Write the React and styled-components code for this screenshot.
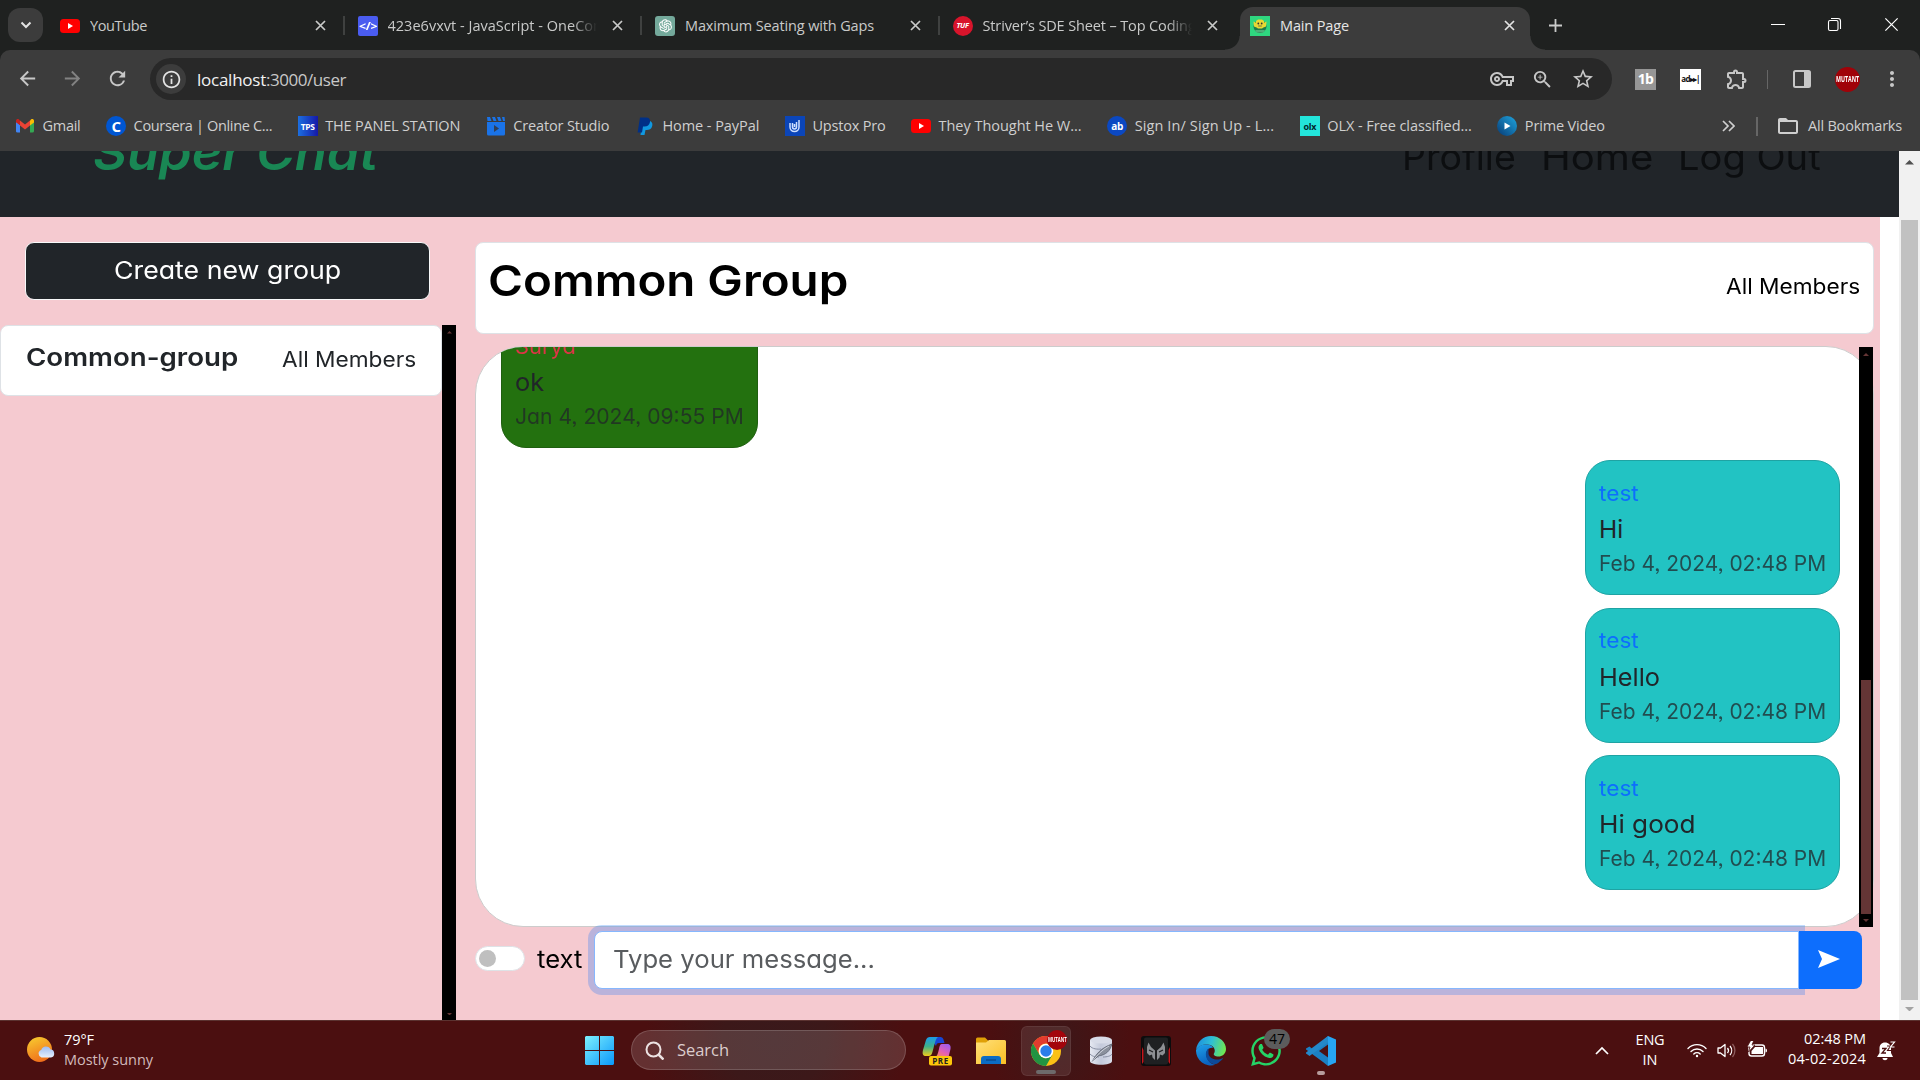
import React, { useLayoutEffect, useRef, useState } from "react";
import styled, { createGlobalStyle, css } from "styled-components";
import {
  MdOutlineVpnKey,
  MdOutlineZoomIn,
  MdStarBorder,
  MdOutlineExtension,
  MdMoreVert,
  MdArrowBack,
  MdArrowForward,
  MdRefresh,
  MdFolderOpen,
  MdInfoOutline,
} from "react-icons/md";
import { FaWhatsapp } from "react-icons/fa";
import { AiOutlineOpenAI } from "react-icons/ai";

const ui = `"Open Sans", "Noto Sans", sans-serif`;
const brand = `Inter, "Open Sans", sans-serif`;

const GlobalStyle = createGlobalStyle`
  * { box-sizing: border-box; }
  body { margin: 0; overflow: hidden; background: #1f2120; font-family: ${ui}; }
  svg { display: block; flex: none; }
`;

/* ---------- text that fills a given width ---------- */

const Tracked = styled.span`
  display: inline-block;
  white-space: nowrap;
`;

function Fit({ w, children }) {
  const ref = useRef(null);
  const [spacing, setSpacing] = useState(0);
  useLayoutEffect(() => {
    setSpacing((w - ref.current.getBoundingClientRect().width) / children.length);
  }, [w, children]);
  return (
    <Tracked ref={ref} style={{ letterSpacing: `${spacing}px` }}>
      {children}
    </Tracked>
  );
}

const Slot = styled.span`
  display: inline-block;
  width: ${(p) => p.$w}px;
  white-space: nowrap;
  text-align: left;
`;

const Stretched = styled.span`
  display: inline-block;
  transform-origin: 0 50%;
`;

function Wide({ w, children }) {
  const ref = useRef(null);
  const [scale, setScale] = useState(1);
  useLayoutEffect(() => {
    setScale(w / ref.current.offsetWidth);
  }, [w, children]);
  return (
    <Slot $w={w}>
      <Stretched ref={ref} style={{ transform: `scaleX(${scale})` }}>
        {children}
      </Stretched>
    </Slot>
  );
}

/* ---------- browser chrome ---------- */

const Screen = styled.div`
  width: 1920px;
  height: 1080px;
  display: flex;
  flex-direction: column;
  overflow: hidden;
`;

const TabStrip = styled.div`
  display: flex;
  height: 50px;
  flex: none;
  background: #1f2120;
  color: #c9cac9;
  font-size: 14.5px;
`;

const TabSearch = styled.div`
  width: 35px;
  height: 34px;
  margin: 8px 3px 0 8px;
  border-radius: 12px;
  background: #3c3c3c;
  display: grid;
  place-items: center;
`;

const Tab = styled.div`
  position: relative;
  width: 297.5px;
  height: 50px;
  padding: 1px 18px 0 14px;
  display: flex;
  align-items: center;
  ${(p) =>
    p.$divider &&
    css`
      &::after {
        content: "";
        position: absolute;
        right: -1px;
        top: 16px;
        width: 2px;
        height: 19px;
        background: #3f4140;
      }
    `}
`;

const ActiveTab = styled(Tab)`
  width: 290px;
  height: 43px;
  margin: 7px 0 0 4px;
  padding: 0 15px 6px 10px;
  border-radius: 13px 13px 0 0;
  background: #3c3c3c;
  color: #e6e6e6;
  &::before,
  &::after {
    content: "";
    position: absolute;
    bottom: 0;
    width: 15px;
    height: 14px;
  }
  &::before {
    left: -15px;
    background: radial-gradient(ellipse at 0 0, transparent 14px, #3c3c3c 15px);
  }
  &::after {
    right: -15px;
    background: radial-gradient(ellipse at 100% 0, transparent 14px, #3c3c3c 15px);
  }
`;

const TabTitle = styled.div`
  width: 209px;
  margin-left: 10px;
  overflow: hidden;
  line-height: 22px;
  mask-image: ${(p) => (p.$fade ? "linear-gradient(90deg, #000 88%, transparent 100%)" : "none")};
`;

const TabClose = styled.div`
  margin-left: auto;
`;

const NewTab = styled.div`
  padding: 19px 0 0 19px;
`;

const WindowButtons = styled.div`
  margin-left: auto;
  padding: 17px 21px 0 0;
  display: flex;
  gap: 42px;
`;

const ToolbarBack = styled.div`
  background: #1f2120;
  flex: none;
`;

const Toolbar = styled.div`
  display: flex;
  align-items: flex-start;
  height: 58px;
  padding: 8px 0 0 16px;
  border-radius: 10px 10px 0 0;
  background: #3c3c3c;
  color: #c7c7c7;
`;

const NavIcon = styled.div`
  width: 45px;
  padding-top: 9px;
  opacity: ${(p) => (p.$dim ? 0.5 : 1)};
`;

const Omnibox = styled.div`
  width: 1462px;
  height: 42px;
  margin-left: -1px;
  border-radius: 21px;
  background: #282828;
  display: flex;
  align-items: center;
  padding: 0 17px 0 6px;
`;

const InfoDisc = styled.div`
  width: 30px;
  height: 30px;
  border-radius: 50%;
  background: #3c3c3c;
  color: #e3e3e3;
  display: grid;
  place-items: center;
`;

const Url = styled.div`
  margin-left: 11px;
  padding-top: 1px;
  font-size: 17px;
  line-height: 26px;
  color: #c9c9c9;
  display: flex;
`;

const Host = styled.span`
  color: #f2f2f2;
`;

const OmniIcons = styled.div`
  margin-left: auto;
  display: flex;
  align-items: center;
  gap: 17px;
`;

const Extensions = styled.div`
  display: flex;
  align-items: center;
  height: 42px;
  margin-left: 23px;
`;

const ExtIcon = styled.div`
  width: 21px;
  height: 21px;
  margin-right: 24px;
  background: ${(p) => p.$bg};
  color: ${(p) => p.$color};
  font: 700 ${(p) => p.$size}px/20px "Open Sans", sans-serif;
  text-align: center;
  letter-spacing: -0.8px;
  overflow: hidden;
`;

const VRule = styled.div`
  width: ${(p) => p.$w || 1}px;
  height: 19px;
  background: #666;
`;

const RuleGap = styled.div`
  margin-left: 21px;
`;

const PanelGroup = styled.div`
  display: flex;
  align-items: center;
  margin-left: 18px;
`;

const PanelSvg = styled.svg`
  margin-left: 25px;
`;

const Avatar = styled.div`
  width: 25px;
  height: 25px;
  border-radius: 50%;
  background: #a00208;
  color: #fff;
  font: 700 9px/24px "Open Sans", sans-serif;
  text-align: center;
  margin: 0 20px 0 24px;
  white-space: nowrap;
`;

const BookmarkBar = styled.div`
  display: flex;
  align-items: center;
  height: 43px;
  flex: none;
  padding: 0 0 7px 15px;
  background: #3c3c3c;
  color: #cfcfcf;
  font-size: 14.5px;
  line-height: 20px;
`;

const Bookmark = styled.div`
  display: flex;
  align-items: center;
  gap: 7.5px;
  margin-right: 25.6px;
`;

const BookmarkEnd = styled.div`
  margin-left: auto;
  display: flex;
  align-items: center;
  padding-right: 18px;
`;

const BookmarkFolder = styled.div`
  display: flex;
  align-items: center;
  gap: 8px;
  margin-left: 18px;
`;

const Badge = styled.div`
  width: 20px;
  height: 20px;
  flex: none;
  border-radius: ${(p) => (p.$round ? "50%" : p.$r || "0")};
  background: ${(p) => p.$bg};
  color: ${(p) => p.$color || "#fff"};
  font: ${(p) => (p.$italic ? "italic " : "")}700 ${(p) => p.$size || 10}px/19px "Open Sans", sans-serif;
  letter-spacing: -0.3px;
  text-align: center;
  display: grid;
  place-items: center;
`;

/* ---------- web page ---------- */

const Page = styled.div`
  display: flex;
  height: 869px;
  flex: none;
  background: #fff;
  font-family: ${brand};
  font-weight: 380;
  font-feature-settings: "cv11", "ss03";
`;

const PageBody = styled.div`
  width: 1899px;
`;

const Navbar = styled.div`
  height: 66px;
  overflow: hidden;
  background: #212529;
`;

const NavInner = styled.div`
  height: 132px;
  margin-top: -67px;
  padding: 0 78px 0 93px;
  display: flex;
  align-items: center;
  justify-content: space-between;
`;

const Brand = styled.div`
  padding-top: 4px;
  color: #198754;
  font-size: 49px;
  font-weight: 600;
  font-style: italic;
`;

const NavLinks = styled.div`
  display: flex;
  gap: 25px;
  padding-top: 13px;
  font-size: 36.5px;
  color: #0c0e10;
`;

const ChatLayout = styled.div`
  display: flex;
  width: 1880px;
  height: 803px;
  background: #f5cad0;
`;

const Sidebar = styled.div`
  width: 456px;
  padding-top: 25px;
  display: flex;
  flex-direction: column;
`;

const CreateButton = styled.div`
  width: 405px;
  height: 57.5px;
  margin: 0 0 25.5px 25px;
  border: 1px solid #f8f9fa;
  border-radius: 9px;
  background: #212529;
  color: #fff;
  font-size: 24.5px;
  line-height: 54px;
  text-align: center;
`;

const GroupList = styled.div`
  flex: 1;
  display: flex;
`;

const GroupCard = styled.div`
  width: 442px;
  height: 71px;
  padding: 0 25px 8px;
  border: 1px solid #dee2e6;
  border-radius: 8px;
  background: #fff;
  color: #212529;
  display: flex;
  align-items: center;
  justify-content: space-between;
`;

const GroupName = styled.div`
  font-size: 24.5px;
  font-weight: 560;
`;

const Members = styled.div`
  font-size: 21.5px;
  padding-top: 4px;
`;

const DarkTrack = styled.div`
  width: ${(p) => p.$w}px;
  background: #000;
  display: flex;
  flex-direction: column;
  align-items: center;
  justify-content: space-between;
  padding: 6px 0 5px;
`;

const Conversation = styled.div`
  width: 1399px;
  margin-left: 19px;
  padding-top: 25px;
  display: flex;
  flex-direction: column;
`;

const Header = styled.div`
  height: 92px;
  padding: 0 13px 0 12px;
  border: 1px solid #dee2e6;
  border-radius: 8px;
  background: #fff;
  color: #000;
  display: flex;
  justify-content: space-between;
`;

const Title = styled.div`
  font-size: 43px;
  font-weight: 570;
  line-height: 75px;
`;

const HeaderMembers = styled.div`
  font-size: 21.5px;
  line-height: 87px;
`;

const ChatFrame = styled.div`
  position: relative;
  height: 581px;
  margin-top: 12px;
`;

const Messages = styled.div`
  height: 100%;
  overflow: hidden;
  padding: 0 33px 36px 25px;
  border: 1px solid #ccc;
  border-radius: 48px;
  background: #fff;
  display: flex;
  flex-direction: column;
  align-items: flex-end;
  justify-content: flex-end;
  gap: 12.3px;
`;

const ChatTrack = styled(DarkTrack)`
  position: absolute;
  right: 1px;
  top: 1px;
  bottom: 0;
`;

const ChatThumb = styled.div`
  width: 10px;
  height: 234px;
  margin: auto 0 5px;
  background: #643535;
`;

const Bubble = styled.div`
  flex: none;
  height: 135px;
  padding: 15.5px 13px 0;
  border: 1px solid ${(p) => (p.$own ? "#1fa3a3" : "#1f5f10")};
  border-radius: 25px;
  background: ${(p) => (p.$own ? "#22c3c3" : "#23710f")};
  color: #212529;
  align-self: ${(p) => (p.$own ? "flex-end" : "flex-start")};
`;

const Sender = styled.div`
  font-size: 21.5px;
  line-height: 33px;
  color: ${(p) => (p.$own ? "#0d6efd" : "#dc3545")};
`;

const Body = styled.div`
  font-size: 24.5px;
  line-height: 38px;
  padding-top: 0.5px;
`;

const Stamp = styled.div`
  font-size: 21.5px;
  line-height: 31px;
  color: rgba(33, 37, 41, 0.75);
`;

const Composer = styled.div`
  position: relative;
  display: flex;
  align-items: center;
  height: 58px;
  margin-top: 4px;
  color: #000;
`;

const Toggle = styled.div`
  width: 50px;
  height: 25px;
  margin-bottom: 3px;
  border-radius: 13px;
  border: 1px solid #dee2e6;
  background: #fff;
  padding: 3px;
  &::before {
    content: "";
    display: block;
    width: 17px;
    height: 17px;
    border-radius: 50%;
    background: #bfbfbf;
  }
`;

const ModeLabel = styled.div`
  margin: 0 12px 3px 12px;
  font-size: 24.5px;
  width: 45px;
`;

const Input = styled.div`
  width: 1205px;
  height: 58px;
  padding-left: 18px;
  border: 1px solid #86b7fe;
  border-radius: 8px 0 0 8px;
  background: #fff;
  box-shadow: 0 0 0 6px rgba(13, 110, 253, 0.25);
  font-size: 24.5px;
  line-height: 55px;
  color: #595c5f;
`;

const Send = styled.div`
  position: relative;
  width: 63px;
  height: 58px;
  padding: 0 4px 2px 0;
  border-radius: 0 8px 8px 0;
  background: #0d6efd;
  display: grid;
  place-items: center;
`;

const PageTrack = styled.div`
  width: 21px;
  background: #f1f1f1;
  display: flex;
  flex-direction: column;
  align-items: center;
  justify-content: space-between;
  padding: 9px 0 9px;
`;

const PageThumb = styled.div`
  width: 17px;
  height: 780px;
  margin: auto 0 7px;
  background: #c1c1c1;
`;

/* ---------- taskbar ---------- */

const Taskbar = styled.div`
  height: 60px;
  flex: none;
  border-top: 1px solid #5b3230;
  background: radial-gradient(ellipse 130px 120px at 775px 20px, #3a191b 0%, #3c1819 40%, transparent 100%),
    radial-gradient(ellipse 70px 90px at 1060px 20px, #3d1718 0%, transparent 100%), #4b0f10;
  color: #fff;
  display: flex;
  align-items: center;
  font-size: 14.5px;
  line-height: 20px;
`;

const Weather = styled.div`
  width: 585px;
  padding-left: 27px;
  display: flex;
  align-items: center;
  gap: 8px;
`;

const WeatherText = styled.div`
  padding-bottom: 2px;
`;

const Muted = styled.div`
  color: #d2babb;
`;

const SearchBox = styled.div`
  width: 275px;
  height: 40px;
  margin: 0 16px 1px 17px;
  padding-left: 13px;
  border: 1px solid rgba(255, 255, 255, 0.16);
  border-radius: 20px;
  background: rgba(255, 255, 255, 0.14);
  display: flex;
  align-items: center;
  gap: 13px;
  color: #dccdcd;
  font-size: 16.5px;
`;

const Apps = styled.div`
  display: flex;
  align-items: center;
  height: 50px;
`;

const AppButton = styled.div`
  position: relative;
  width: 50px;
  height: 50px;
  margin-right: 5px;
  display: grid;
  place-items: center;
  border-radius: 6px;
  ${(p) => p.$active && "background: rgba(255,255,255,.09); border: 1px solid rgba(255,255,255,.07);"}
`;

const ExplorerButton = styled.div`
  width: 50px;
  margin: 0 5px 0 14px;
  display: grid;
  place-items: center;
`;

const Indicator = styled.div`
  position: absolute;
  bottom: 1px;
  left: 50%;
  width: ${(p) => p.$w}px;
  height: 4px;
  margin-left: ${(p) => -p.$w / 2}px;
  border-radius: 2px;
  background: ${(p) => p.$color};
`;

const MiniAvatar = styled.div`
  position: absolute;
  left: 25px;
  top: 3px;
  width: 20px;
  height: 20px;
  border-radius: 50%;
  background: #a3050c;
  font: 700 7.5px/18px "Open Sans", sans-serif;
  text-align: center;
`;

const Count = styled.div`
  position: absolute;
  left: 23px;
  top: 3px;
  width: 26px;
  height: 20px;
  border-radius: 10px;
  background: #5c5c5c;
  color: #000;
  font-size: 14px;
  line-height: 20px;
  text-align: center;
`;

const Tray = styled.div`
  margin-left: auto;
  display: flex;
  align-items: center;
  padding-right: 24px;
`;

const Language = styled.div`
  width: 40px;
  margin: 0 17px 0 21px;
  padding-bottom: 1px;
  text-align: center;
`;

const TrayIcons = styled.div`
  display: flex;
  align-items: center;
  gap: 10px;
  padding-bottom: 1px;
`;

const Clock = styled.div`
  margin: 0 11px 0 20px;
  padding-bottom: 3px;
  text-align: right;
`;

/* ---------- drawings ---------- */

const Cross = ({ size = 11, stroke = 1.7, color = "#c9cac9" }) => (
  <svg width={size} height={size} viewBox="0 0 11 11">
    <path d="M1 1l9 9M10 1l-9 9" stroke={color} strokeWidth={stroke} fill="none" />
  </svg>
);

const YouTube = () => (
  <svg width="20" height="20" viewBox="0 0 20 20">
    <rect y="3" width="20" height="14" rx="3.5" fill="#f00" />
    <path d="M8 7l5 3-5 3z" fill="#fff" />
  </svg>
);

const Triangle = ({ up, size = 5, color }) => (
  <svg width={size} height={size / 2} viewBox="0 0 10 5">
    <path d={up ? "M0 5L5 0l5 5z" : "M0 0h10L5 5z"} fill={color} />
  </svg>
);

const Gmail = () => (
  <svg width="20" height="20" viewBox="0 0 20 20">
    <path d="M1 5v10.500h4V8.500z" fill="#4285f4" />
    <path d="M15 8.500v8h2.500a1.500 1.500 0 001.500-1.500V5z" fill="#34a853" />
    <path d="M15 4.500v5l4-3V5c0-2-2-2.500-3-1.500z" fill="#fbbc04" />
    <path d="M5 4.500l5 4 5-4v5l-5 4-5-4z" fill="#ea4335" />
    <path d="M1 5v1.500l4 3v-5L4 3.500C3 2.500 1 3 1 5z" fill="#c5221f" />
    <path d="M1 6.500v8.500a1.500 1.500 0 001.500 1.500H5v-7z" fill="#4285f4" />
  </svg>
);

const Clapper = () => (
  <svg width="20" height="20" viewBox="0 0 20 20">
    <path d="M1 6h18v12a1.500 1.500 0 01-1.500 1.500h-15A1.500 1.500 0 011 18z" fill="#1a73e8" />
    <path d="M1 1h3l1.500 4h-4zM6 1h3l1.500 4h-3zM11 1h3l1.500 4h-3zM16 1h2.500l.5 4h-2z" fill="#1a73e8" />
    <path d="M8 9l5 3.500L8 16z" fill="#2f3f58" />
  </svg>
);

const PayPal = () => (
  <svg width="16" height="20" viewBox="0 0 16 20">
    <path d="M5 5h6.500c3 0 4.500 2 3.700 5-.7 3-3 4-5.500 4H8.500l-1 5H3.500z" fill="#1098e0" />
    <path d="M3 1.500h6c3.200 0 4.500 1.800 4 4.500-.6 3-2.600 4.500-5.500 4.500H6l-1 6H.6z" fill="#003087" />
  </svg>
);

const Upstox = () => (
  <Badge $bg="#0b45b8">
    <svg width="16" height="16" viewBox="0 0 16 16" fill="none" stroke="#cfe0ff" strokeWidth="1.500">
      <path d="M3 5v4c0 6 9 6 9 0V2M5.500 5v4c0 2.500 4 2.500 4 0V4M7.500 6v3" />
    </svg>
  </Badge>
);

const Prime = () => (
  <svg width="20" height="20" viewBox="0 0 20 20">
    <defs>
      <linearGradient id="prime" x1="0" y1="1" x2="1" y2="0">
        <stop offset="0" stopColor="#073a74" />
        <stop offset="1" stopColor="#1fa6e0" />
      </linearGradient>
    </defs>
    <circle cx="10" cy="10" r="10" fill="url(#prime)" />
    <path d="M7.500 6.500l6 3.500-6 3.500z" fill="#fff" />
  </svg>
);

const PageFavicon = () => (
  <svg width="20" height="20" viewBox="0 0 20 20">
    <rect width="20" height="20" fill="#2fd67f" />
    <circle cx="10" cy="10.500" r="6.500" fill="#1f7a4a" />
    <path d="M6 5l2-1.500h4L14 5v6l-2 1.500H8L6 11z" fill="#e8d834" />
    <path d="M3.500 5.500l3 1.500v4.500l-2.500-1zM16.500 5.500l-3 1.500v4.500l2.500-1z" fill="#e8d834" />
    <circle cx="8.300" cy="7.500" r=".9" fill="#333" />
    <circle cx="11.700" cy="7.500" r=".9" fill="#333" />
    <path d="M8.200 10h3.600" stroke="#555" strokeWidth=".8" />
    <path d="M5 14h10l-1.500 2.500h-7z" fill="#4fae7a" />
  </svg>
);

const Sun = () => (
  <svg width="29" height="32" viewBox="0 0 29 32">
    <defs>
      <linearGradient id="sun" x1=".2" y1="0" x2=".6" y2="1">
        <stop offset="0" stopColor="#f7c92f" />
        <stop offset="1" stopColor="#ef6c1a" />
      </linearGradient>
      <linearGradient id="cloud" x1="0" y1="0" x2="0" y2="1">
        <stop offset="0" stopColor="#9dbcf2" />
        <stop offset="1" stopColor="#e6effc" />
      </linearGradient>
    </defs>
    <circle cx="12.500" cy="14.500" r="12.500" fill="url(#sun)" />
    <path d="M14.500 22.500a4 4 0 01-.3-7.600 5 5 0 019.400-.3A4 4 0 0124 22.500z" fill="url(#cloud)" />
  </svg>
);

const WindowsLogo = () => (
  <svg width="29" height="29" viewBox="0 0 29 29">
    <defs>
      <linearGradient id="win" gradientUnits="userSpaceOnUse" x1="0" y1="0" x2="29" y2="29">
        <stop offset="0" stopColor="#7df0fd" />
        <stop offset="1" stopColor="#0a98fb" />
      </linearGradient>
    </defs>
    <path d="M1 0h13v14H0V1zM15 0h13l1 1v13H15zM0 15h14v14H1l-1-1zM15 15h14v13l-1 1H15z" fill="url(#win)" />
  </svg>
);

const Copilot = () => (
  <svg width="30" height="30" viewBox="0 0 30 30">
    <defs>
      <linearGradient id="cpa" x1="0" y1="0" x2="0" y2="1">
        <stop offset="0" stopColor="#1b9bea" />
        <stop offset=".5" stopColor="#3fb18a" />
        <stop offset="1" stopColor="#f0cc1a" />
      </linearGradient>
      <linearGradient id="cpb" x1=".8" y1="0" x2=".2" y2="1">
        <stop offset="0" stopColor="#9c5bf0" />
        <stop offset=".6" stopColor="#e660b0" />
        <stop offset="1" stopColor="#f58a5c" />
      </linearGradient>
    </defs>
    <path d="M8 1h10c3 0 3.500 2 4.500 6H17c-2 0-2.500 1-3 3z" fill="#1746d6" />
    <path d="M8 1h8c-2 1-2.500 4-4 9-1.500 6-2 10-5 10H4c-3 0-4-2-3-6L4 4c.7-2 2-3 4-3z" fill="url(#cpa)" />
    <path d="M20 8h5c3 0 4 2 3.500 5l-2 8H13c2.500-1 3-4 4-8 .6-3 1-5 3-5z" fill="url(#cpb)" />
    <rect x="7" y="20" width="23" height="9.500" rx="2" fill="#fdc70a" />
    <text x="18.500" y="27.600" fontSize="8" fontWeight="700" fontFamily="Open Sans, sans-serif" textAnchor="middle" letterSpacing=".6" fill="#222">
      PRE
    </text>
  </svg>
);

const Explorer = () => (
  <svg width="30" height="28" viewBox="0 0 30 28">
    <defs>
      <linearGradient id="fold" x1="0" y1="0" x2="1" y2="1">
        <stop offset="0" stopColor="#ffe07a" />
        <stop offset="1" stopColor="#fbbf24" />
      </linearGradient>
    </defs>
    <path d="M0 2a1.500 1.500 0 011.500-1.500H9L12.500 4v4H0z" fill="#e0a006" />
    <path d="M0 5.500h10L13 3h15.500A1.500 1.500 0 0130 4.500V27H0z" fill="url(#fold)" />
    <path d="M5 27v-5a3 3 0 013-3h14a3 3 0 013 3v5z" fill="#0c6cc4" />
    <path d="M10 23h10" stroke="#0a4b90" strokeWidth="1.500" />
  </svg>
);

const Chrome = () => (
  <svg width="30" height="30" viewBox="0 0 30 30">
    <circle cx="15" cy="15" r="15" fill="#fbc116" />
    <path d="M2 7.500A15 15 0 0128 7.500H15a7.500 7.500 0 00-6.500 11.200z" fill="#e33b2e" />
    <path d="M2 7.500l6.500 11.200L10 20l4 2.500 7.500-4L15 30A15 15 0 012 7.500z" fill="#229342" />
    <circle cx="15" cy="15" r="7.300" fill="#fff" />
    <circle cx="15" cy="15" r="5.700" fill="#2b7de9" />
  </svg>
);

const Database = () => (
  <svg width="24" height="29" viewBox="0 0 24 29">
    <defs>
      <linearGradient id="db" x1="0" y1="0" x2="1" y2="0">
        <stop offset="0" stopColor="#e6e9f2" />
        <stop offset=".5" stopColor="#c3c9da" />
        <stop offset="1" stopColor="#d9ddea" />
      </linearGradient>
    </defs>
    <path d="M1 4v21c0 5 22 5 22 0V4z" fill="url(#db)" />
    <ellipse cx="12" cy="4" rx="11" ry="3.500" fill="#d8dce8" />
    <path d="M1 10c2 3 8 3.500 11 3M1 18c3 3 6 3 9 3M14 21c4 0 8-1 9-3" stroke="#888fa3" fill="none" />
    <path d="M3 26c4-8 9-14 20-18-2 7-6 11-14 12z" fill="#8a909c" stroke="#5c6270" strokeWidth=".8" />
    <path d="M3 26C8 19 13 14 20 10" stroke="#dfe3ee" strokeWidth=".8" fill="none" />
  </svg>
);

const Predator = () => (
  <svg width="30" height="30" viewBox="0 0 30 30">
    <rect width="30" height="30" rx="3" fill="#0c0c0d" />
    <rect x="3" y="1.500" width="24" height="27" rx="2" fill="#1f2022" />
    <path d="M1 11l1.500 3v12L1 28zM29 11l-1.500 3v12l1.500 2z" fill="#c4161c" />
    <path
      d="M7.500 6.500L10 11l4 3.500V24l-2.500-2.500-.5-3-2.500 1-2.500-2.500v-6zM22.500 6.500L20 11l-4 3.500V24l2.500-2.500.5-3 2.500 1 2.500-2.500v-6z"
      fill="#8d8f93"
    />
    <path d="M8 14l4 2M22 14l-4 2" stroke="#1f2022" strokeWidth="1.200" />
  </svg>
);

const Edge = () => (
  <svg width="30" height="30" viewBox="0 0 30 30">
    <defs>
      <linearGradient id="ea" x1="0" y1=".3" x2="1" y2=".5">
        <stop offset="0" stopColor="#1c8fe0" />
        <stop offset=".5" stopColor="#2fbfd4" />
        <stop offset="1" stopColor="#6fe651" />
      </linearGradient>
      <linearGradient id="eb" x1="0" y1="0" x2=".3" y2="1">
        <stop offset="0" stopColor="#1fa0e8" />
        <stop offset="1" stopColor="#0b62c0" />
      </linearGradient>
    </defs>
    <path d="M0 14C1 6 7 0 15 0c9 0 15 6.500 15 13 0 5-4 7.500-7.500 7.500S17 19 18 17.500c2.500-4-1-9-7-9C6 8.500 2 10.500 0 14z" fill="url(#ea)" />
    <path d="M0 14c2-4 6-6 11-5.500 4 .4 6 2 6 3.500-4-1-7.500 3-6.500 8 1 5 5 8.500 9 8.800A15 15 0 010 14z" fill="url(#eb)" />
    <path d="M12.500 12.500C9 15 9 21 12.500 25c3.500 4 8.500 4 11 .8 2-1.400 3.300-2.800 3.800-4C23 25 14 24 12.500 18z" fill="#0c4a9a" />
  </svg>
);

const VsCode = () => (
  <svg width="30" height="30" viewBox="0 0 30 30">
    <path d="M22 0L7.500 14 3.500 10.500 0 12.500v1L17 26l5 4z" fill="#1b80c4" />
    <path d="M0 17.500l3.500 2.500L22 6.500V0L0 16.500z" fill="#2489ca" />
    <path d="M22 0l8 3.500v23L22 30z" fill="#27a5f2" />
    <path d="M22 8.500v13L13 15z" fill="#4a1214" />
  </svg>
);

const Wifi = () => (
  <svg width="20" height="15" viewBox="0 0 20 15" fill="none" stroke="#fff" strokeWidth="1.400" strokeLinecap="round">
    <path d="M1 5.500a12.500 12.500 0 0118 0M4 8.500a8.500 8.500 0 0112 0M6.800 11a4.600 4.600 0 016.400 0" />
    <circle cx="10" cy="13" r="1.200" fill="#fff" stroke="none" />
  </svg>
);

const Speaker = () => (
  <svg width="20" height="17" viewBox="0 0 20 17" fill="none" stroke="#fff" strokeWidth="1.300" strokeLinejoin="round">
    <path d="M1 6v5h2.500L8 14.500v-12L3.500 6z" />
    <path d="M10.500 6a4 4 0 010 5M13 4a7 7 0 010 9" />
    <path d="M15.500 2a10 10 0 010 13" stroke="#8d5c5d" />
  </svg>
);

const Battery = () => (
  <svg width="21" height="18" viewBox="0 0 21 18">
    <rect x="2" y="4" width="15.500" height="11" rx="2.500" fill="none" stroke="#fff" strokeWidth="1.400" />
    <path d="M8 6h8v7H4.500v-3z" fill="#fff" />
    <path d="M18.500 7.500c2 0 2 4 0 4z" fill="#fff" />
    <path d="M4-1L0 6h3l-1.500 5L8 4H5l2-5z" fill="#fff" stroke="#4b0f10" strokeWidth=".8" />
  </svg>
);

const Bell = () => (
  <svg width="19" height="20" viewBox="0 0 19 20">
    <path d="M8 1.500C4.500 1.500 2.500 4 2.500 7.500V12L0 16h16l-2-4V7.500C14 4 11.500 1.500 8 1.500z" fill="#fff" />
    <path d="M5.500 17h5c0 3-5 3-5 0z" fill="#fff" />
    <path d="M5 7.500h4L5 12h4" stroke="#4b0f10" strokeWidth="1.300" fill="none" />
    <path d="M10 5h3.500l-3 4.500H14" stroke="#4b0f10" strokeWidth="1.100" fill="none" />
    <path d="M13.500 1h4l-4 5h4" stroke="#fff" strokeWidth="1.200" fill="none" />
  </svg>
);

/* ---------- data ---------- */

const tabs = [
  { title: "YouTube", w: 57, icon: <YouTube />, divider: true },
  {
    title: "423e6vxvt - JavaScript - OneCom",
    w: 219,
    fade: true,
    divider: true,
    icon: (
      <Badge $bg="#4a5cf0" $r="2px" $size={11}>
        <Wide w={18}>{"</>"}</Wide>
      </Badge>
    ),
  },
  {
    title: "Maximum Seating with Gaps",
    w: 189,
    divider: true,
    icon: (
      <Badge $bg="#74a99b" $r="3px">
        <AiOutlineOpenAI size={17} />
      </Badge>
    ),
  },
  {
    title: "Striver’s SDE Sheet – Top Coding",
    w: 213,
    fade: true,
    icon: (
      <Badge $bg="#d8142b" $round $italic $size={7.5}>
        TUF
      </Badge>
    ),
  },
];

const bookmarks = [
  { label: "Gmail", w: 38, icon: <Gmail /> },
  { label: "Coursera | Online C...", w: 138.5, icon: <Badge $bg="#0056d2" $round $size={15}>C</Badge> },
  { label: "THE PANEL STATION", w: 135, icon: <Badge $bg="linear-gradient(90deg,#1c6fe0,#1518a8)" $size={8.5}>TPS</Badge> },
  { label: "Creator Studio", w: 96, icon: <Clapper /> },
  { label: "Home - PayPal", w: 97, icon: <Badge $bg="none"><PayPal /></Badge> },
  { label: "Upstox Pro", w: 73, icon: <Upstox /> },
  { label: "They Thought He W...", w: 143, icon: <YouTube /> },
  { label: "Sign In/ Sign Up - L...", w: 139.5, icon: <Badge $bg="#0b48c2" $round $size={10}>ab</Badge> },
  { label: "OLX - Free classified...", w: 144.5, icon: <Badge $bg="#23e5db" $color="#02282c" $size={9}>olx</Badge> },
  { label: "Prime Video", w: 80, icon: <Prime /> },
];

const messages = [
  { from: "Surya", fw: 61, text: "ok", tw: 29, time: "Jan 4, 2024, 09:55 PM", dw: 229 },
  { own: true, from: "test", fw: 40, text: "Hi", tw: 24, time: "Feb 4, 2024, 02:48 PM", dw: 227 },
  { own: true, from: "test", fw: 40, text: "Hello", tw: 61, time: "Feb 4, 2024, 02:48 PM", dw: 227 },
  { own: true, from: "test", fw: 40, text: "Hi good", tw: 96, time: "Feb 4, 2024, 02:48 PM", dw: 227 },
];

/* ---------- sections ---------- */

const Browser = () => (
  <>
    <TabStrip>
      <TabSearch>
        <svg width="12" height="8" viewBox="0 0 12 8">
          <path d="M1.500 1.500L6 6l4.500-4.500" stroke="#e3e3e3" strokeWidth="2" fill="none" />
        </svg>
      </TabSearch>
      {tabs.map((t) => (
        <Tab key={t.title} $divider={t.divider}>
          {t.icon}
          <TabTitle $fade={t.fade}>
            <Fit w={t.w}>{t.title}</Fit>
          </TabTitle>
          <TabClose>
            <Cross />
          </TabClose>
        </Tab>
      ))}
      <ActiveTab>
        <PageFavicon />
        <TabTitle>
          <Fit w={69}>Main Page</Fit>
        </TabTitle>
        <TabClose>
          <Cross color="#e3e3e3" />
        </TabClose>
      </ActiveTab>
      <NewTab>
        <svg width="13" height="13" viewBox="0 0 13 13">
          <path d="M6.500 0v13M0 6.500h13" stroke="#c9cac9" strokeWidth="1.800" />
        </svg>
      </NewTab>
      <WindowButtons>
        <svg width="14" height="15" viewBox="0 0 14 15">
          <path d="M0 7.500h14" stroke="#fff" />
        </svg>
        <svg width="15" height="15" viewBox="0 0 15 15" fill="none" stroke="#fff" strokeWidth="1.100">
          <rect x="1.500" y="3.500" width="9.500" height="10" rx="1.500" />
          <path d="M4 1.500h7a2.500 2.500 0 012.500 2.500v8" />
        </svg>
        <Cross size={15} stroke={0.9} color="#fff" />
      </WindowButtons>
    </TabStrip>
    <ToolbarBack>
      <Toolbar>
        <NavIcon>
          <MdArrowBack size={23} />
        </NavIcon>
        <NavIcon $dim>
          <MdArrowForward size={23} />
        </NavIcon>
        <NavIcon>
          <MdRefresh size={23} />
        </NavIcon>
        <Omnibox>
          <InfoDisc>
            <MdInfoOutline size={21} />
          </InfoDisc>
          <Url>
            <Host>
              <Fit w={69}>localhost</Fit>
            </Host>
            <Fit w={80}>:3000/user</Fit>
          </Url>
          <OmniIcons>
            <MdOutlineVpnKey size={24} />
            <MdOutlineZoomIn size={23} />
            <MdStarBorder size={24} />
          </OmniIcons>
        </Omnibox>
        <Extensions>
          <ExtIcon $bg="#969696" $color="#fff" $size={14}>
            1b
          </ExtIcon>
          <ExtIcon $bg="#fff" $color="#111" $size={8}>
            ad▸▸|
          </ExtIcon>
          <MdOutlineExtension size={24} />
          <PanelGroup>
            <VRule />
            <PanelSvg width="18" height="18" viewBox="0 0 18 18">
              <rect x="1" y="1" width="16" height="16" rx="1.500" fill="none" stroke="#c7c7c7" strokeWidth="2" />
              <path d="M11 1h6v16h-6z" fill="#c7c7c7" />
            </PanelSvg>
            <Avatar>
              <Wide w={23}>MUTANT</Wide>
            </Avatar>
            <MdMoreVert size={24} />
          </PanelGroup>
        </Extensions>
      </Toolbar>
    </ToolbarBack>
    <BookmarkBar>
      {bookmarks.map((b) => (
        <Bookmark key={b.label}>
          {b.icon}
          <Fit w={b.w}>{b.label}</Fit>
        </Bookmark>
      ))}
      <BookmarkEnd>
        <svg width="13" height="12" viewBox="0 0 13 12">
          <path d="M1 1l5 5-5 5M7 1l5 5-5 5" stroke="#cfcfcf" strokeWidth="1.700" fill="none" />
        </svg>
        <RuleGap>
          <VRule $w={2} />
        </RuleGap>
        <BookmarkFolder>
          <MdFolderOpen size={24} />
          <Fit w={94}>All Bookmarks</Fit>
        </BookmarkFolder>
      </BookmarkEnd>
    </BookmarkBar>
  </>
);

const WebPage = () => (
  <Page>
    <PageBody>
      <Navbar>
        <NavInner>
          <Brand>
            <Wide w={285}>Super Chat</Wide>
          </Brand>
          <NavLinks>
            <Wide w={114}>Profile</Wide>
            <Wide w={112}>Home</Wide>
            <Wide w={143}>Log Out</Wide>
          </NavLinks>
        </NavInner>
      </Navbar>
      <ChatLayout>
        <Sidebar>
          <CreateButton>
            <Wide w={227}>Create new group</Wide>
          </CreateButton>
          <GroupList>
            <GroupCard>
              <GroupName>
                <Wide w={212}>Common-group</Wide>
              </GroupName>
              <Members>
                <Wide w={134}>All Members</Wide>
              </Members>
            </GroupCard>
            <DarkTrack $w={14}>
              <Triangle up color="#643535" />
              <Triangle color="#643535" />
            </DarkTrack>
          </GroupList>
        </Sidebar>
        <Conversation>
          <Header>
            <Title>
              <Wide w={360}>Common Group</Wide>
            </Title>
            <HeaderMembers>
              <Wide w={134}>All Members</Wide>
            </HeaderMembers>
          </Header>
          <ChatFrame>
            <Messages>
              {messages.map((m, i) => (
                <Bubble key={i} $own={m.own}>
                  <Sender $own={m.own}>
                    <Wide w={m.fw}>{m.from}</Wide>
                  </Sender>
                  <Body>
                    <Wide w={m.tw}>{m.text}</Wide>
                  </Body>
                  <Stamp>
                    <Wide w={m.dw}>{m.time}</Wide>
                  </Stamp>
                </Bubble>
              ))}
            </Messages>
            <ChatTrack $w={14}>
              <Triangle up size={6} color="#643535" />
              <ChatThumb />
              <Triangle size={6} color="#643535" />
            </ChatTrack>
          </ChatFrame>
          <Composer>
            <Toggle />
            <ModeLabel>
              <Wide w={45}>text</Wide>
            </ModeLabel>
            <Input>
              <Wide w={262}>Type your message...</Wide>
            </Input>
            <Send>
              <svg width="24" height="20" viewBox="0 0 24 20">
                <path d="M1 1l22 9-22 9 4-9z" fill="#fff" />
              </svg>
            </Send>
          </Composer>
        </Conversation>
      </ChatLayout>
    </PageBody>
    <PageTrack>
      <Triangle up size={9} color="#505050" />
      <PageThumb />
      <Triangle size={9} color="#a3a3a3" />
    </PageTrack>
  </Page>
);

const SystemBar = () => (
  <Taskbar>
    <Weather>
      <Sun />
      <WeatherText>
        <div>
          <Fit w={30}>79°F</Fit>
        </div>
        <Muted>
          <Fit w={89}>Mostly sunny</Fit>
        </Muted>
      </WeatherText>
    </Weather>
    <WindowsLogo />
    <SearchBox>
      <svg width="19" height="19" viewBox="0 0 19 19" fill="none" stroke="#ece2e2" strokeWidth="2">
        <circle cx="8.500" cy="8.500" r="7" />
        <path d="M13.500 13.500l5 5" strokeWidth="2.500" />
      </svg>
      <Fit w={52}>Search</Fit>
    </SearchBox>
    <Copilot />
    <Apps>
      <ExplorerButton>
        <Explorer />
      </ExplorerButton>
      <AppButton $active>
        <Chrome />
        <MiniAvatar>
          <Wide w={19}>MUTANT</Wide>
        </MiniAvatar>
        <Indicator $w={20} $color="#6d6a6b" />
      </AppButton>
      <AppButton>
        <Database />
      </AppButton>
      <AppButton>
        <Predator />
      </AppButton>
      <AppButton>
        <Edge />
      </AppButton>
      <AppButton>
        <FaWhatsapp size={34} color="#25d366" />
        <Count>47</Count>
      </AppButton>
      <AppButton>
        <VsCode />
        <Indicator $w={8} $color="#b79d9d" />
      </AppButton>
    </Apps>
    <Tray>
      <svg width="14" height="9" viewBox="0 0 14 9">
        <path d="M1 8l6-6 6 6" stroke="#fff" strokeWidth="1.700" fill="none" />
      </svg>
      <Language>
        <div>
          <Fit w={29}>ENG</Fit>
        </div>
        <div>
          <Fit w={15}>IN</Fit>
        </div>
      </Language>
      <TrayIcons>
        <Wifi />
        <Speaker />
        <Battery />
      </TrayIcons>
      <Clock>
        <div>
          <Fit w={62}>02:48 PM</Fit>
        </div>
        <div>
          <Fit w={78}>04-02-2024</Fit>
        </div>
      </Clock>
      <Bell />
    </Tray>
  </Taskbar>
);

export default function App() {
  return (
    <Screen>
      <GlobalStyle />
      <Browser />
      <WebPage />
      <SystemBar />
    </Screen>
  );
}
